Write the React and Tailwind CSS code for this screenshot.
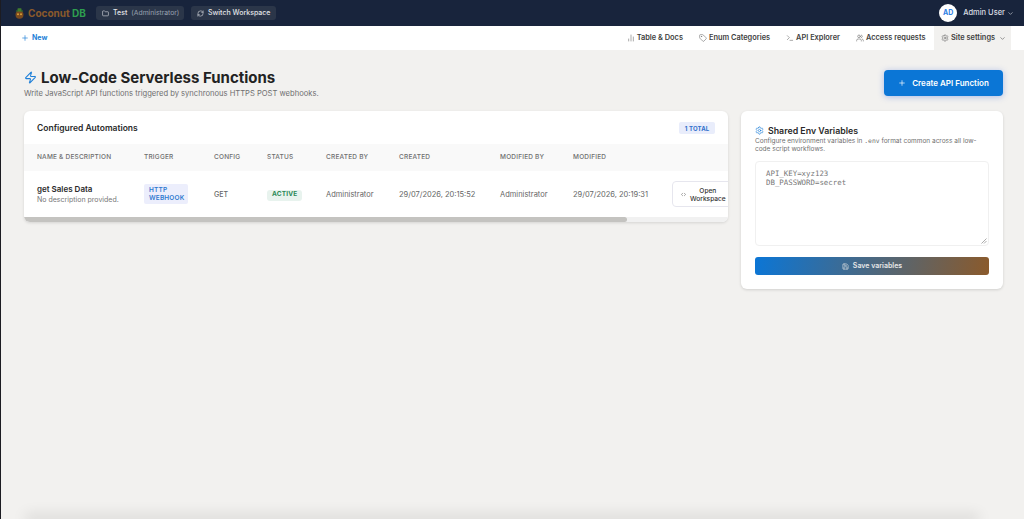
import React from "react";
import {
  Folder,
  RefreshCw,
  ChevronDown,
  Plus,
  ChartNoAxesColumn,
  Tag,
  Terminal,
  Users,
  Settings,
  Zap,
  Code,
  Save,
} from "lucide-react";

const tabs = [
  { label: "Table & Docs", icon: ChartNoAxesColumn },
  { label: "Enum Categories", icon: Tag },
  { label: "API Explorer", icon: Terminal },
  { label: "Access requests", icon: Users },
];

const columns = [
  { label: "Name & Description", w: "w-[107px]" },
  { label: "Trigger", w: "w-[70px]" },
  { label: "Config", w: "w-[53px]" },
  { label: "Status", w: "w-[59px]" },
  { label: "Created By", w: "w-[73px]" },
  { label: "Created", w: "w-[101px]" },
  { label: "Modified By", w: "w-[73px]" },
  { label: "Modified", w: "w-[99px]" },
];

function Logo() {
  return (
    <svg width="9" height="11" viewBox="0 0 9 11" className="shrink-0">
      <ellipse cx="4.5" cy="6.8" rx="4" ry="4" fill="#7a4a1e" />
      <rect x="0.8" y="2.6" width="7.4" height="1" rx="0.5" fill="#3f7d2e" />
      <rect x="2.5" y="0.3" width="4" height="2.6" rx="0.6" fill="#3f7d2e" />
      <circle cx="3" cy="6.2" r="1" fill="#d9a036" />
      <circle cx="6" cy="6.2" r="1" fill="#d9a036" />
    </svg>
  );
}

export default function App() {
  return (
    <div className="h-[519px] w-[1024px] overflow-hidden flex flex-col bg-[#f2f1ef] font-['Inter',sans-serif] relative">
      <header className="h-[26px] bg-[#18243c] flex items-center justify-between pl-[15px] pr-[10px] shrink-0">
        <div className="flex items-center">
          <Logo />
          <span className="ml-[4px] text-[10px] font-bold text-[#8a5a2b] leading-none w-[57px] whitespace-nowrap">
            Coconut <span className="text-[#2e9e4f]">DB</span>
          </span>
          <div className="ml-[11px] h-[14px] w-[88px] pl-[6px] rounded-[3px] bg-[#2b3649] flex items-center gap-[4px] text-[7px] text-[#e2e4e8] font-medium whitespace-nowrap">
            <Folder size={7} className="shrink-0" />
            <span>Test</span>
            <span className="text-[#9aa2b0] font-normal text-[6.8px]">(Administrator)</span>
          </div>
          <div className="ml-[7px] h-[14px] w-[85px] pl-[6px] rounded-[3px] bg-[#2b3649] flex items-center gap-[4px] text-[7px] text-[#e2e4e8] font-medium whitespace-nowrap">
            <RefreshCw size={7} className="shrink-0" />
            <span>Switch Workspace</span>
          </div>
        </div>
        <div className="flex items-center">
          <div className="w-[18px] h-[18px] rounded-full bg-white flex items-center justify-center text-[7px] font-bold text-[#2f80e4]">
            AD
          </div>
          <span className="ml-[6px] text-[7.5px] font-medium text-[#d9dce2]">Admin User</span>
          <ChevronDown size={7} className="ml-[2px] text-[#d9dce2]" />
        </div>
      </header>

      <nav className="h-[24px] bg-white flex items-center justify-between pl-[21px] pr-[13px] shrink-0">
        <div className="flex items-center gap-[3px] text-[7px] font-bold text-[#1e7fd8]">
          <Plus size={8} />
          <span>New</span>
        </div>
        <div className="flex items-stretch h-full text-[7.4px] font-semibold text-[#3f3f3f] whitespace-nowrap">
          {tabs.map((tab) => (
            <div key={tab.label} className="flex items-center gap-[2px] px-[8px]">
              <tab.icon size={8} strokeWidth={1.5} className="text-[#555]" />
              <span>{tab.label}</span>
            </div>
          ))}
          <div className="flex items-center gap-[2px] pl-[7px] ml-[0.5px] w-[77px] bg-[#f2f1ef]">
            <Settings size={8} strokeWidth={1.5} className="text-[#555]" />
            <span>Site settings</span>
            <ChevronDown size={7} className="ml-[2px] text-[#555]" />
          </div>
        </div>
      </nav>

      <main className="flex-1 pl-[24px] pr-[21px] pt-[18px]">
        <div className="flex items-start justify-between h-[43px]">
          <div>
            <div className="flex items-center gap-[4px]">
              <Zap size={13} strokeWidth={2} className="text-[#1e7fd8]" />
              <h1 className="text-[15px] leading-[19px] font-bold text-[#222]">Low-Code Serverless Functions</h1>
            </div>
            <p className="text-[7.6px] leading-[10px] mt-[2px] text-[#6f6f6f] whitespace-nowrap">
              Write JavaScript API functions triggered by synchronous HTTPS POST webhooks.
            </p>
          </div>
          <button className="mt-[2px] w-[119px] h-[26px] rounded-[4px] bg-[#0b76d6] text-white text-[8px] font-semibold flex items-center justify-center gap-[6px] shadow-[0_1px_6px_rgba(40,90,220,0.35)]">
            <Plus size={8} />
            Create API Function
          </button>
        </div>

        <div className="flex items-start gap-[13px]">
          <section className="w-[704px] h-[111px] bg-white rounded-[6px] overflow-hidden shadow-[0_1px_3px_rgba(0,0,0,0.12)] shrink-0 flex flex-col">
            <div className="h-[33px] flex items-center justify-between px-[13px] pt-[1px] shrink-0">
              <h2 className="text-[8.5px] font-semibold text-[#2a2a2a]">Configured Automations</h2>
              <span className="h-[12px] w-[36px] justify-center rounded-[2px] bg-[#e9edfb] text-[6px] font-bold tracking-wide text-[#2f6fcb] flex items-center">
                1 TOTAL
              </span>
            </div>
            <div className="h-[27px] bg-[#f9f9f9] flex items-center pl-[13px] pt-[1px] shrink-0 whitespace-nowrap">
              {columns.map((col) => (
                <div key={col.label} className={`${col.w} shrink-0 text-[6.5px] font-medium uppercase tracking-[0.2px] text-[#6e6e6e]`}>
                  {col.label}
                </div>
              ))}
            </div>
            <div className="h-[46px] flex items-center pl-[13px] text-[7.5px] text-[#666] shrink-0 whitespace-nowrap">
              <div className="w-[107px] shrink-0">
                <div className="text-[8px] font-semibold text-[#2a2a2a] leading-[11px]">get Sales Data</div>
                <div className="text-[7px] leading-[10px] text-[#777]">No description provided.</div>
              </div>
              <div className="w-[70px] shrink-0">
                <span className="flex items-center w-[44px] h-[20px] rounded-[2px] bg-[#eceefc] text-[6.5px] leading-[8px] font-semibold tracking-wide text-[#2f7ad0] pl-[5px]">
                  <span>HTTP<br />WEBHOOK</span>
                </span>
              </div>
              <div className="w-[53px] shrink-0 pt-[2px] text-[7px] font-medium">GET</div>
              <div className="w-[59px] shrink-0 pt-[1px]">
                <span className="inline-flex items-center h-[11px] px-[5px] rounded-[3px] bg-[#e8f3ee] text-[6.5px] font-bold tracking-wide text-[#2c8a58]">
                  ACTIVE
                </span>
              </div>
              <div className="w-[73px] shrink-0 pt-[2px]">Administrator</div>
              <div className="w-[101px] shrink-0 pt-[2px]">29/07/2026, 20:15:52</div>
              <div className="w-[73px] shrink-0 pt-[2px]">Administrator</div>
              <div className="w-[99px] shrink-0 pt-[2px]">29/07/2026, 20:19:31</div>
              <button className="w-[66px] h-[26px] rounded-[4px] border border-[#e6e6ee] bg-white flex items-center pl-[8px] pt-[1px] gap-[4px] text-[6.6px] font-medium text-[#333] shrink-0">
                <Code size={5} />
                <span className="text-center leading-[8px]">Open<br />Workspace</span>
              </button>
            </div>
            <div className="h-[5px] bg-[#f1f1f1] shrink-0">
              <div className="h-full w-[603px] bg-[#c4c3c0] rounded-r-[3px]" />
            </div>
          </section>

          <aside className="w-[262px] h-[178px] bg-white rounded-[6px] shadow-[0_1px_3px_rgba(0,0,0,0.14)] shrink-0 px-[14px] pt-[14px]">
            <div className="flex items-center gap-[4px]">
              <Settings size={9} strokeWidth={1.75} className="text-[#1e7fd8]" />
              <h2 className="text-[8.8px] leading-[11px] font-semibold text-[#2a2a2a] whitespace-nowrap">Shared Env Variables</h2>
            </div>
            <p className="mt-[1px] text-[6.5px] leading-[8px] text-[#6f6f6f] whitespace-nowrap">
              Configure environment variables in <span className="font-['DejaVu_Sans_Mono',monospace] text-[6.4px]">.env</span> format common across all low-
              <br />
              code script workflows.
            </p>
            <div className="relative mt-[8px] h-[85px] rounded-[4px] border border-[#f0f0f0] bg-white pl-[10px] pt-[7px] font-['DejaVu_Sans_Mono',monospace] text-[7.4px] leading-[9px] text-[#777]">
              <div>API_KEY=xyz123</div>
              <div>DB_PASSWORD=secret</div>
              <svg width="6" height="6" viewBox="0 0 6 6" className="absolute right-[1px] bottom-[1px] text-[#888]">
                <path d="M0.5 5.5 L5.5 0.5 M3 5.5 L5.5 3" stroke="currentColor" strokeWidth="0.7" />
              </svg>
            </div>
            <button className="mt-[11px] w-full h-[18px] rounded-[3px] bg-[linear-gradient(100deg,#0b76d6,#8b5a2b)] flex items-center justify-center gap-[4px] text-[7px] font-semibold text-[#e8e8e8]">
              <Save size={7} />
              Save variables
            </button>
          </aside>
        </div>
      </main>
      <div className="absolute left-0 top-0 bottom-0 w-[1px] bg-[#1c1c22]" />
      <div className="absolute bottom-0 left-[30px] right-[50px] h-0 shadow-[0_0_14px_5px_rgba(0,0,0,0.1)]" />
    </div>
  );
}
